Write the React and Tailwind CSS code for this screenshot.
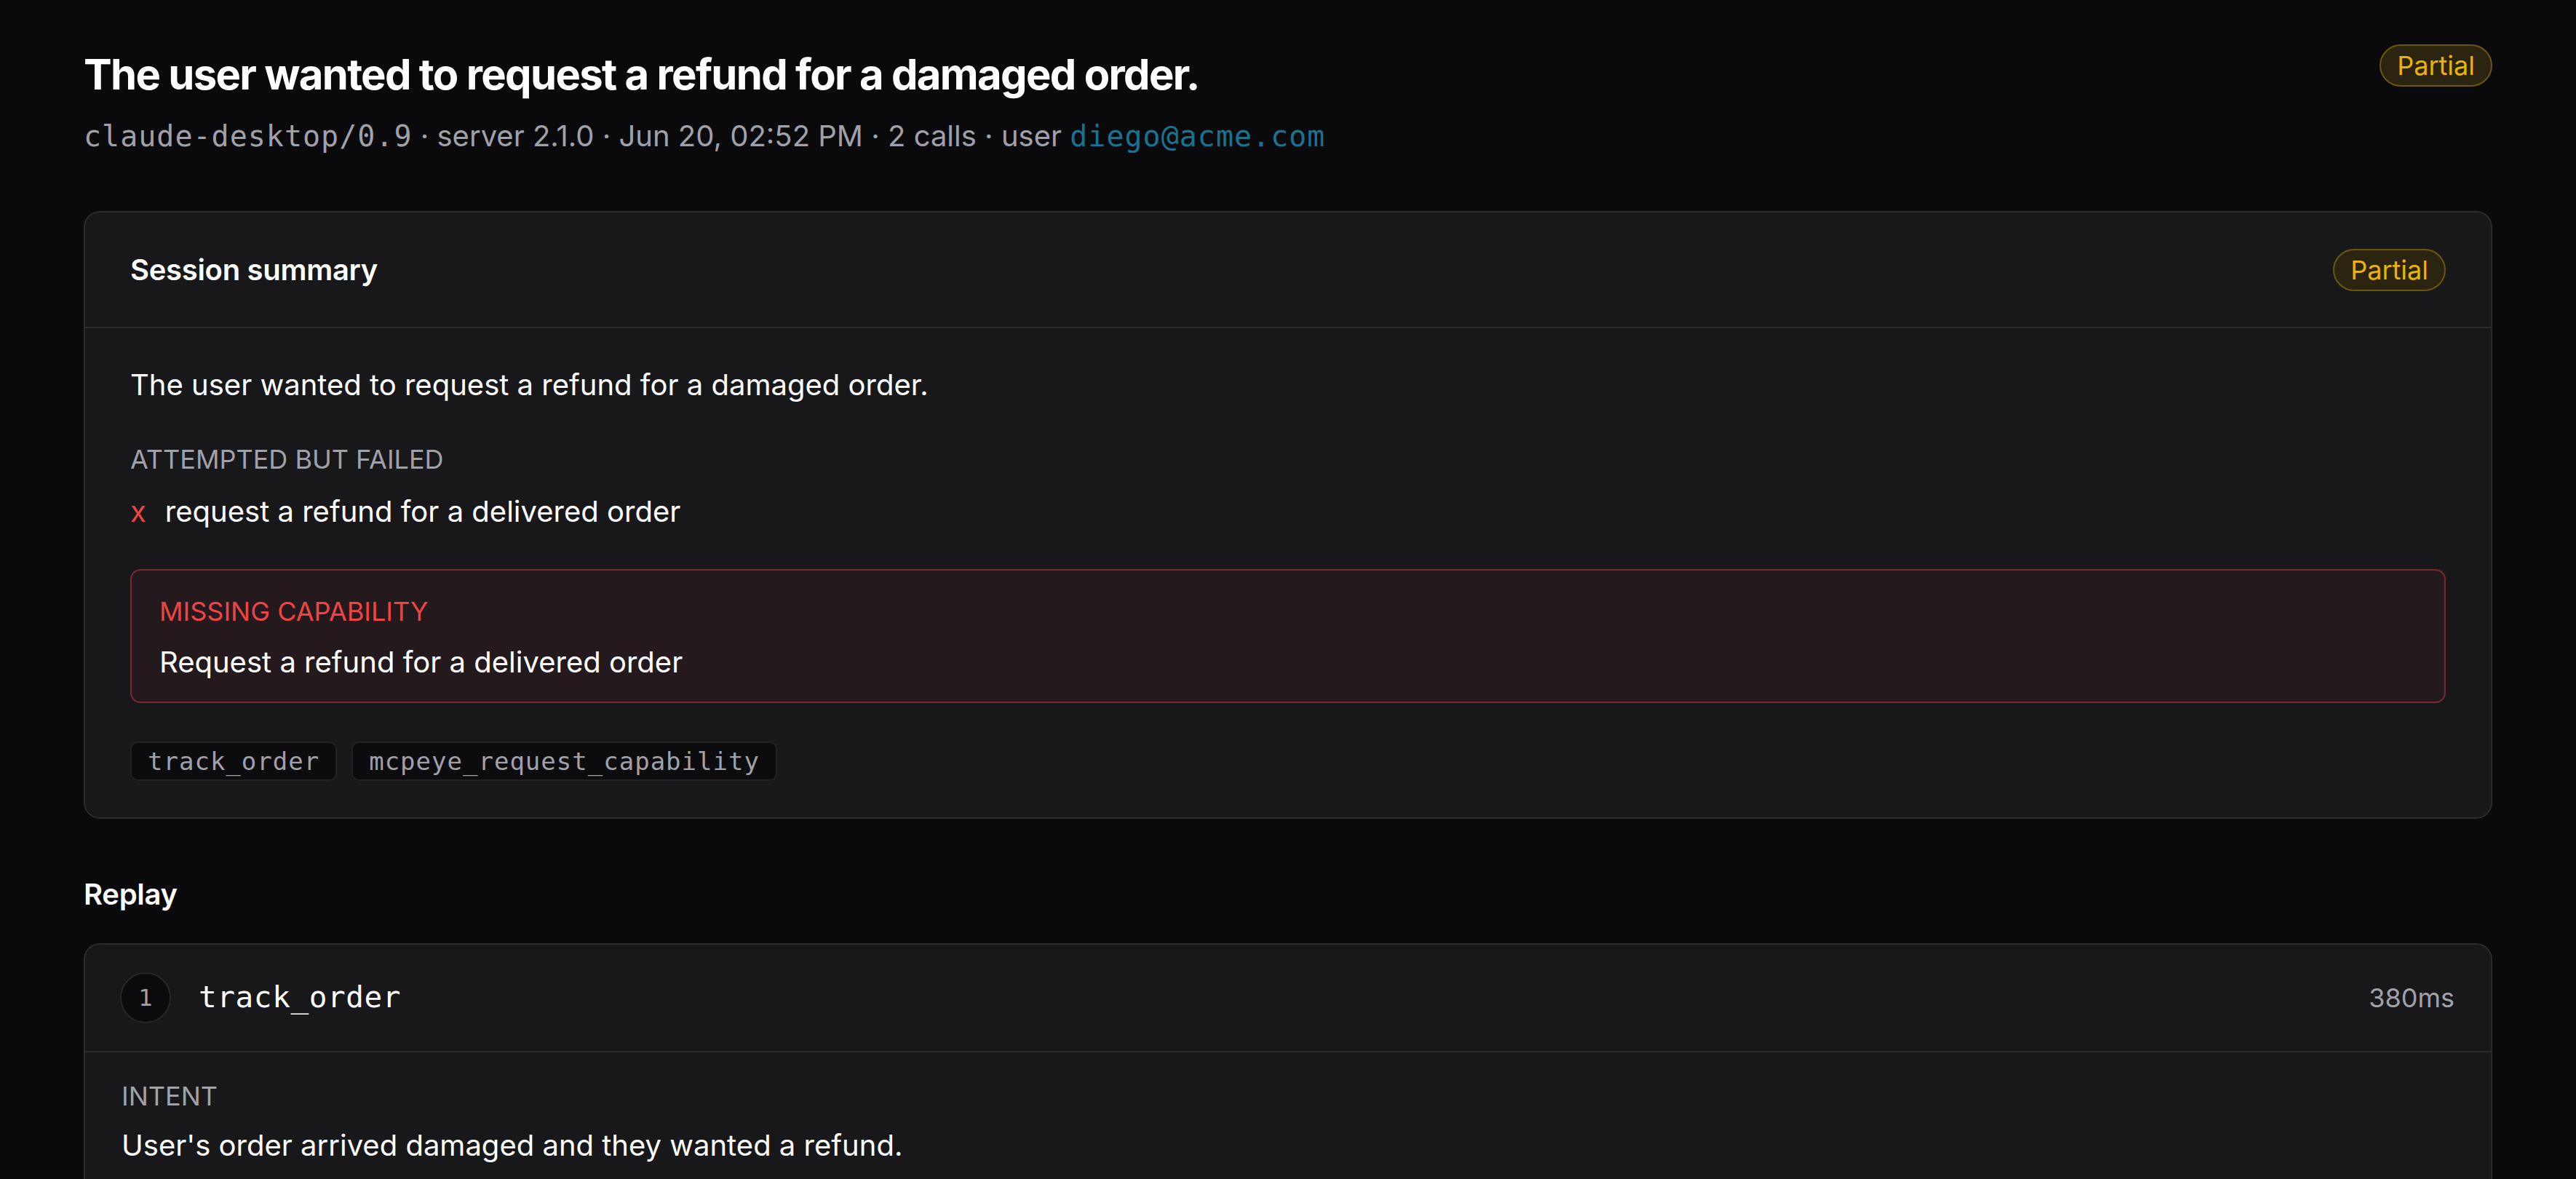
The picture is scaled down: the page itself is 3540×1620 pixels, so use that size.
const SANS = "font-['Inter','Liberation_Sans',sans-serif]";
const MONO = "font-['DejaVu_Sans_Mono','Liberation_Mono',monospace]";

const tools = ["track_order", "mcpeye_request_capability"];

function Badge({ children }) {
  return (
    <span className="inline-flex h-[58px] items-center rounded-full border-2 border-[#6b5514] bg-[#2a2411] px-[22px] text-[36px] text-[#eab308]">
      {children}
    </span>
  );
}

function SectionLabel({ children, className = "" }) {
  return (
    <div className={`text-[36px] leading-[48px] uppercase text-[#a1a1aa] ${className}`}>
      {children}
    </div>
  );
}

export default function App() {
  return (
    <div className={`min-h-screen w-full bg-[#0a0a0c] px-[115px] pt-[67px] pb-16 text-white ${SANS}`}>
      {/* header */}
      <div className="flex items-start justify-between">
        <div>
          <h1 className="text-[58px] leading-[70px] font-bold tracking-[-1.7px]">
            The user wanted to request a refund for a damaged order.
          </h1>
          <div className="mt-[22px] text-[40px] leading-[56px] text-[#a1a1aa]">
            <span className={`${MONO} text-[40px] tracking-[1px]`}>claude-desktop/0.9</span>
            <span> · server 2.1.0 · Jun 20, 02:52 PM · 2 calls · user </span>
            <span className={`${MONO} text-[40px] tracking-[1px] text-[#1b7290]`}>diego@acme.com</span>
          </div>
        </div>
        <div className="mt-[-6px]">
          <Badge>Partial</Badge>
        </div>
      </div>

      {/* session summary */}
      <section className="mt-[75px] rounded-[22px] border-2 border-[#2c2c30] bg-[#18181b]">
        <div className="flex h-[159px] items-center justify-between border-b-2 border-[#2c2c30] px-[62px]">
          <h2 className="text-[40px] font-semibold tracking-[-0.3px]">Session summary</h2>
          <Badge>Partial</Badge>
        </div>
        <div className="px-[62px] pt-[48px] pb-[50px]">
          <p className="text-[40px] leading-[60px]">
            The user wanted to request a refund for a damaged order.
          </p>
          <SectionLabel className="mt-[48px]">Attempted but failed</SectionLabel>
          <div className="mt-[18px] flex items-center gap-[26px] text-[40px] leading-[60px]">
            <span className="text-[#ef4444]">x</span>
            <span>request a refund for a delivered order</span>
          </div>
          <div className="mt-[49px] rounded-[14px] border-2 border-[#7a2a2f] bg-[#241a1e] px-[38px] pt-[31px] pb-[24px]">
            <div className="text-[36px] leading-[50px] uppercase text-[#ef4444]">Missing capability</div>
            <div className="mt-[15px] text-[40px] leading-[60px]">Request a refund for a delivered order</div>
          </div>
          <div className="mt-[53px] flex gap-[20px]">
            {tools.map((t) => (
              <span
                key={t}
                className={`flex h-[54px] items-center rounded-[10px] border-2 border-[#222226] bg-[#0c0c0e] px-[22px] text-[34px] tracking-[1px] text-[#a1a1aa] ${MONO}`}
              >
                {t}
              </span>
            ))}
          </div>
        </div>
      </section>

      {/* replay */}
      <h2 className="mt-[74px] text-[40px] leading-[60px] font-semibold tracking-[-0.3px]">Replay</h2>
      <section className="mt-[37px] rounded-[22px] border-2 border-[#2c2c30] bg-[#18181b]">
        <div className="flex h-[148px] items-center justify-between border-b-2 border-[#2c2c30] pl-[48px] pr-[50px]">
          <div className="flex items-center gap-[38px]">
            <span className={`flex h-[70px] w-[70px] items-center justify-center rounded-full border-2 border-[#26262b] bg-[#0b0b0d] text-[32px] text-[#a1a1aa] ${MONO}`}>
              1
            </span>
            <span className={`text-[41px] tracking-[0.6px] ${MONO}`}>track_order</span>
          </div>
          <span className="text-[36px] text-[#a1a1aa]">380ms</span>
        </div>
        <div className="px-[50px] pt-[36px] pb-[40px]">
          <SectionLabel>Intent</SectionLabel>
          <p className="mt-[14px] text-[40px] leading-[60px]">
            User's order arrived damaged and they wanted a refund.
          </p>
        </div>
      </section>
    </div>
  );
}
